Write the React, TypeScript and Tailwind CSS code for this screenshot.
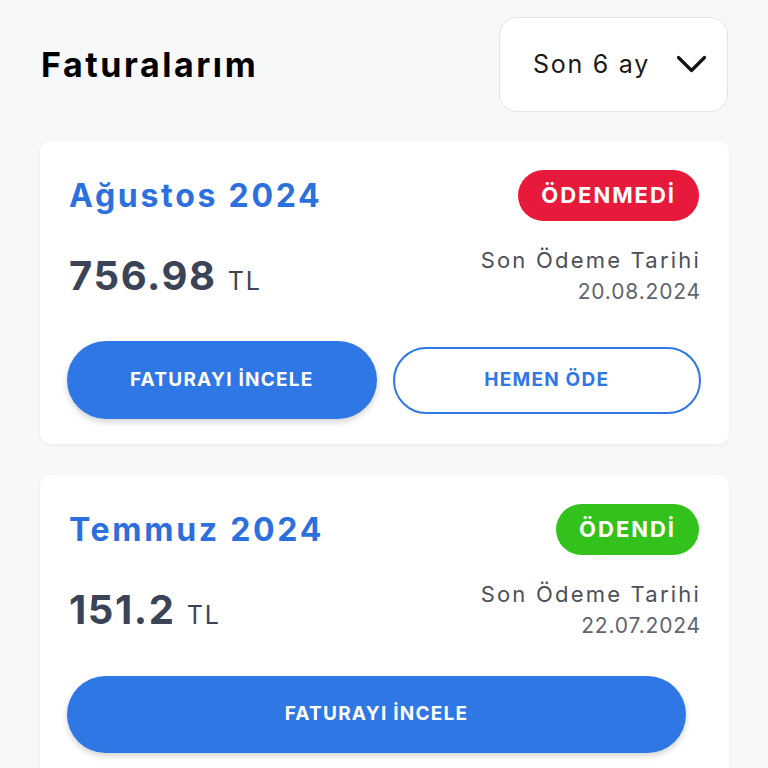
import React from "react";

const font = { fontFamily: "Inter, 'Noto Sans', sans-serif" };

function Chevron() {
  return (
    <svg width="31" height="19" viewBox="0 0 31 19" fill="none">
      <polyline points="2.5,2.5 15.5,15.5 28.5,2.5" stroke="#111" strokeWidth="3.2" strokeLinecap="round" strokeLinejoin="round" />
    </svg>
  );
}

function Card({
  title,
  amount,
  status,
  paid,
  date,
}: {
  title: string;
  amount: string;
  status: string;
  paid: boolean;
  date: string;
}) {
  return (
    <div className="bg-white rounded-[10px] shadow-[0_1px_4px_rgba(0,0,0,0.06)] pt-[29px] px-[28px] pb-[25px]">
      <div className="flex items-center justify-between h-[51px]">
        <div className="text-[32px] font-bold text-[#2c70de] tracking-[0.085em] leading-none pl-[1px]">{title}</div>
        <div
          className={
            "h-[51px] mr-[2px] rounded-full flex items-center justify-center px-[23px] text-white font-bold text-[22px] tracking-[0.09em] " +
            (paid ? "bg-[#33c21b]" : "bg-[#e81a3b]")
          }
        >
          {status}
        </div>
      </div>
      <div className="flex items-center justify-between mt-[23px]">
        <div className="flex items-baseline gap-[11px] pl-[1px]">
          <span className="text-[40px] font-bold text-[#3b4357] tracking-[0.04em] leading-[48px]">{amount}</span>
          <span className="text-[25px] text-[#3b4357] tracking-[0.08em]">TL</span>
        </div>
        <div className="flex flex-col items-end">
          <div className="text-[22px] leading-[32px] text-[#4b505b] tracking-[0.1em]">Son Ödeme Tarihi</div>
          <div className="text-[21px] leading-[32px] text-[#60646f] tracking-[0.04em]">{date}</div>
        </div>
      </div>
      {paid ? (
        <div className="mt-[34px]">
          <button className="w-[619px] h-[77px] -ml-[1px] rounded-full bg-[#2f77e5] text-white font-bold text-[19px] tracking-[0.065em] shadow-[0_3px_6px_rgba(0,0,0,0.18)]">
            FATURAYI İNCELE
          </button>
        </div>
      ) : (
        <div className="grid grid-cols-2 gap-4 mt-[33px] items-center">
          <button className="h-[78px] -ml-[1px] rounded-full bg-[#2f77e5] text-white font-bold text-[19px] tracking-[0.065em] shadow-[0_3px_6px_rgba(0,0,0,0.18)]">
            FATURAYI İNCELE
          </button>
          <button className="h-[67px] rounded-full bg-white border-2 border-[#2f77e5] text-[#2f77e5] font-bold text-[19px] tracking-[0.065em]">
            HEMEN ÖDE
          </button>
        </div>
      )}
    </div>
  );
}

export default function App() {
  return (
    <div style={font} className="w-[768px] h-[768px] overflow-hidden bg-[#f7f8fa]">
      <div className="flex items-center justify-between pt-[17px] pl-[41px] pr-[40px]">
        <div className="text-[34px] font-bold text-black tracking-[0.075em]">Faturalarım</div>
        <div className="w-[229px] h-[95px] bg-white border border-[#e3e4e7] rounded-[18px] flex items-center pl-[33px] gap-[26px]">
          <span className="text-[25px] text-[#1a1a1a] tracking-[0.07em]">Son 6 ay</span>
          <Chevron />
        </div>
      </div>
      <div className="px-[40px] pr-[39px] mt-[29px] flex flex-col gap-[31px]">
        <Card title="Ağustos 2024" amount="756.98" status="ÖDENMEDİ" paid={false} date="20.08.2024" />
        <Card title="Temmuz 2024" amount="151.2" status="ÖDENDİ" paid={true} date="22.07.2024" />
      </div>
    </div>
  );
}
